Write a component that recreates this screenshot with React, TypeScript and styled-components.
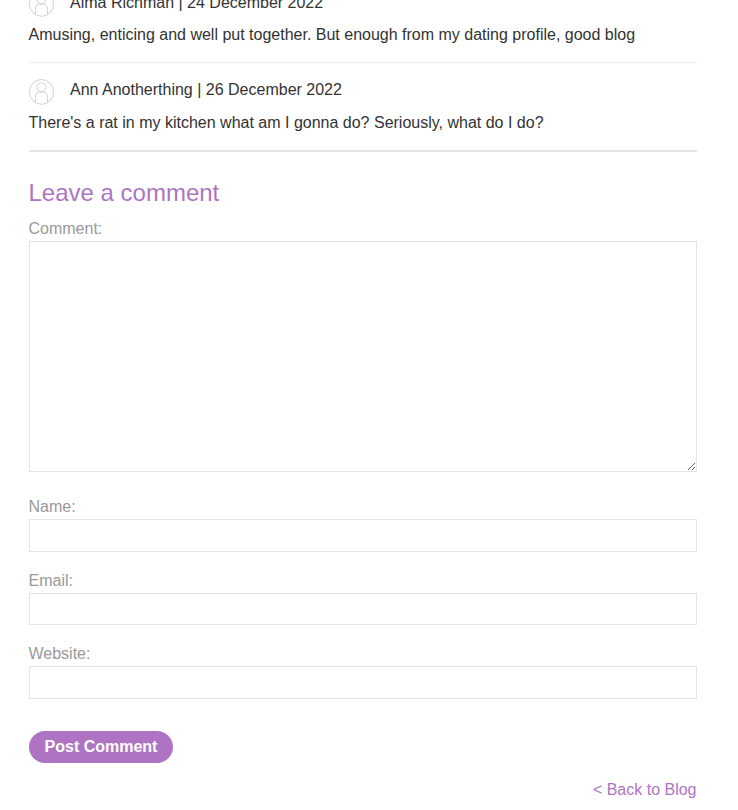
import React from "react";
import styled, { createGlobalStyle } from "styled-components";

const GlobalStyle = createGlobalStyle`
  *, *::before, *::after { box-sizing: border-box; }
  html, body { margin: 0; background: #fff; overflow: hidden; }
  body {
    height: 810px;
    font-family: "Liberation Sans", Arial, sans-serif;
    font-size: 16px;
    color: #333;
  }
`;

const Page = styled.main`
  width: 738px;
  height: 810px;
  padding: 0 41.5px 0 28.5px;
  overflow: hidden;
`;

const CommentList = styled.section`
  display: flex;
  flex-direction: column;
  margin-top: -26px;
  border-bottom: 2px solid #e4e4e4;
`;

const CommentItem = styled.article`
  height: 87px;
  padding-top: 16px;

  &:not(:last-child) {
    height: 89px;
    padding-top: 17px;
    border-bottom: 1px solid #e9eeef;
  }
`;

const CommentHead = styled.header<{ $lineHeight: number }>`
  display: flex;
  height: 26px;
  gap: 16px;
  line-height: ${(p) => p.$lineHeight}px;
`;

const Avatar = styled.svg`
  flex: none;
  width: 25.5px;
  height: 26px;
  overflow: visible;
  fill: none;
  stroke: #cdd2d3;
  stroke-width: 1;
`;

const CommentBody = styled.p`
  margin: 6px 0 0;
  line-height: 24px;
`;

const Form = styled.form`
  display: flex;
  flex-direction: column;
  align-items: flex-start;
`;

const Title = styled.h2`
  margin: 26px 0 0;
  font-size: 24px;
  line-height: 30px;
  font-weight: 400;
  color: #ae74c3;
`;

const Field = styled.label<{ $gap: number }>`
  display: flex;
  flex-direction: column;
  width: 100%;
  margin-top: ${(p) => p.$gap}px;
  line-height: 24px;
  color: #999;
`;

const TextArea = styled.textarea`
  display: block;
  width: 100%;
  height: 231px;
  margin: 0;
  padding: 6px;
  border: 1px solid #e4e4e4;
  border-radius: 0;
  background: #fff;
  font: inherit;
  resize: both;
`;

const Input = styled.input<{ $height?: number }>`
  width: 100%;
  height: ${(p) => p.$height ?? 33}px;
  margin: 0;
  padding: 6px;
  border: 1px solid #e4e4e4;
  border-radius: 0;
  background: #fff;
  font: inherit;
`;

const SubmitButton = styled.button`
  width: 144.5px;
  height: 32px;
  margin: 32px 0 0;
  padding: 0 0 0 0.5px;
  border: 0;
  border-radius: 16px;
  background: #ae74c3;
  color: #fff;
  font: bold 16px/32px "Liberation Sans", Arial, sans-serif;
`;

const Footer = styled.footer`
  display: flex;
  justify-content: flex-end;
  margin-top: 15px;
  line-height: 24px;
`;

const BackLink = styled.a`
  color: #ae74c3;
  text-decoration: none;
`;

const comments = [
  {
    by: "Alma Richman | 24 December 2022",
    text: "Amusing, enticing and well put together. But enough from my dating profile, good blog",
    lineHeight: 24,
  },
  {
    by: "Ann Anotherthing | 26 December 2022",
    text: "There's a rat in my kitchen what am I gonna do? Seriously, what do I do?",
    lineHeight: 22,
  },
];

function Person() {
  return (
    <Avatar viewBox="0 0 25.5 26" aria-hidden="true">
      <ellipse cx="12.5" cy="12.9" rx="12.1" ry="12.4" />
      <circle cx="12.4" cy="8.4" r="4.6" />
      <path d="M6.4 23.6V18.5C6.4 15 8.5 12.9 11.2 12.9H13.6C16.3 12.9 18.5 15 18.5 18.5V23.6" />
    </Avatar>
  );
}

export default function App() {
  return (
    <>
      <GlobalStyle />
      <Page>
        <CommentList>
          {comments.map((c) => (
            <CommentItem key={c.by}>
              <CommentHead $lineHeight={c.lineHeight}>
                <Person />
                {c.by}
              </CommentHead>
              <CommentBody>{c.text}</CommentBody>
            </CommentItem>
          ))}
        </CommentList>
        <Form onSubmit={(e) => e.preventDefault()}>
          <Title>Leave a comment</Title>
          <Field $gap={9}>
            Comment:
            <TextArea />
          </Field>
          <Field $gap={23}>
            Name:
            <Input />
          </Field>
          <Field $gap={17}>
            Email:
            <Input $height={32} />
          </Field>
          <Field $gap={17}>
            Website:
            <Input />
          </Field>
          <SubmitButton type="submit">Post Comment</SubmitButton>
        </Form>
        <Footer>
          <BackLink href="#">&lt; Back to Blog</BackLink>
        </Footer>
      </Page>
    </>
  );
}
